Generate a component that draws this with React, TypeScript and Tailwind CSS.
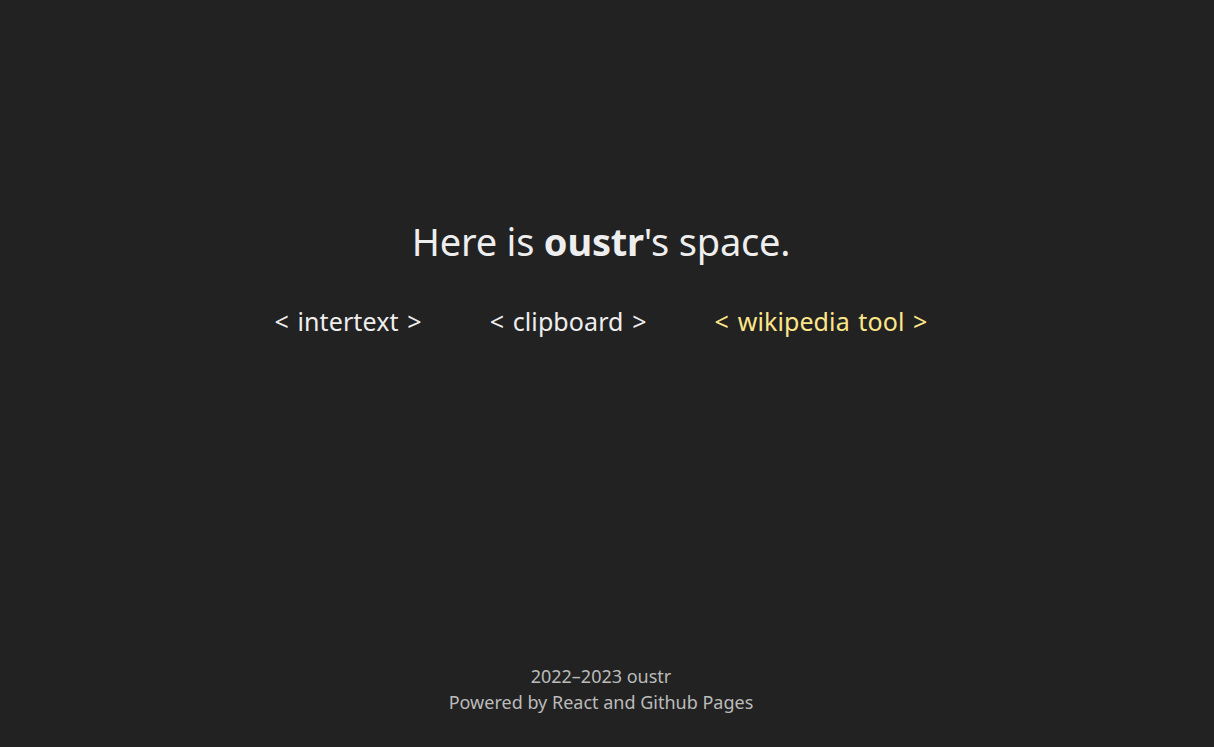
export default function App() {
  const links = [
    { name: 'intertext', active: false },
    { name: 'clipboard', active: false },
    { name: 'wikipedia tool', active: true },
  ];

  return (
    <div className="h-[747px] bg-[#222222] flex flex-col items-center pr-[12px] font-['Noto_Sans',sans-serif]">
      <main className="flex flex-col items-center pt-[215px] flex-1">
        <h1 className="text-[38px] leading-[52px] text-[#eeeeee] tracking-[-0.2px]">
          Here is <b className="font-bold">oustr</b>'s space.
        </h1>
        <nav className="flex gap-[68px] mt-[36px]">
          {links.map((link) => (
            <a
              key={link.name}
              href="#"
              className={`text-[25px] leading-[36px] tracking-[0.1px] [word-spacing:2px] ${
                link.active ? 'text-[#fde68a]' : 'text-[#eeeeee]'
              }`}
            >
              &lt; {link.name} &gt;
            </a>
          ))}
        </nav>
      </main>
      <footer className="flex flex-col items-center pb-[32px] text-[18px] leading-[26px] text-[#bbbbbb]">
        <p>2022–2023 oustr</p>
        <p>Powered by React and Github Pages</p>
      </footer>
    </div>
  );
}
